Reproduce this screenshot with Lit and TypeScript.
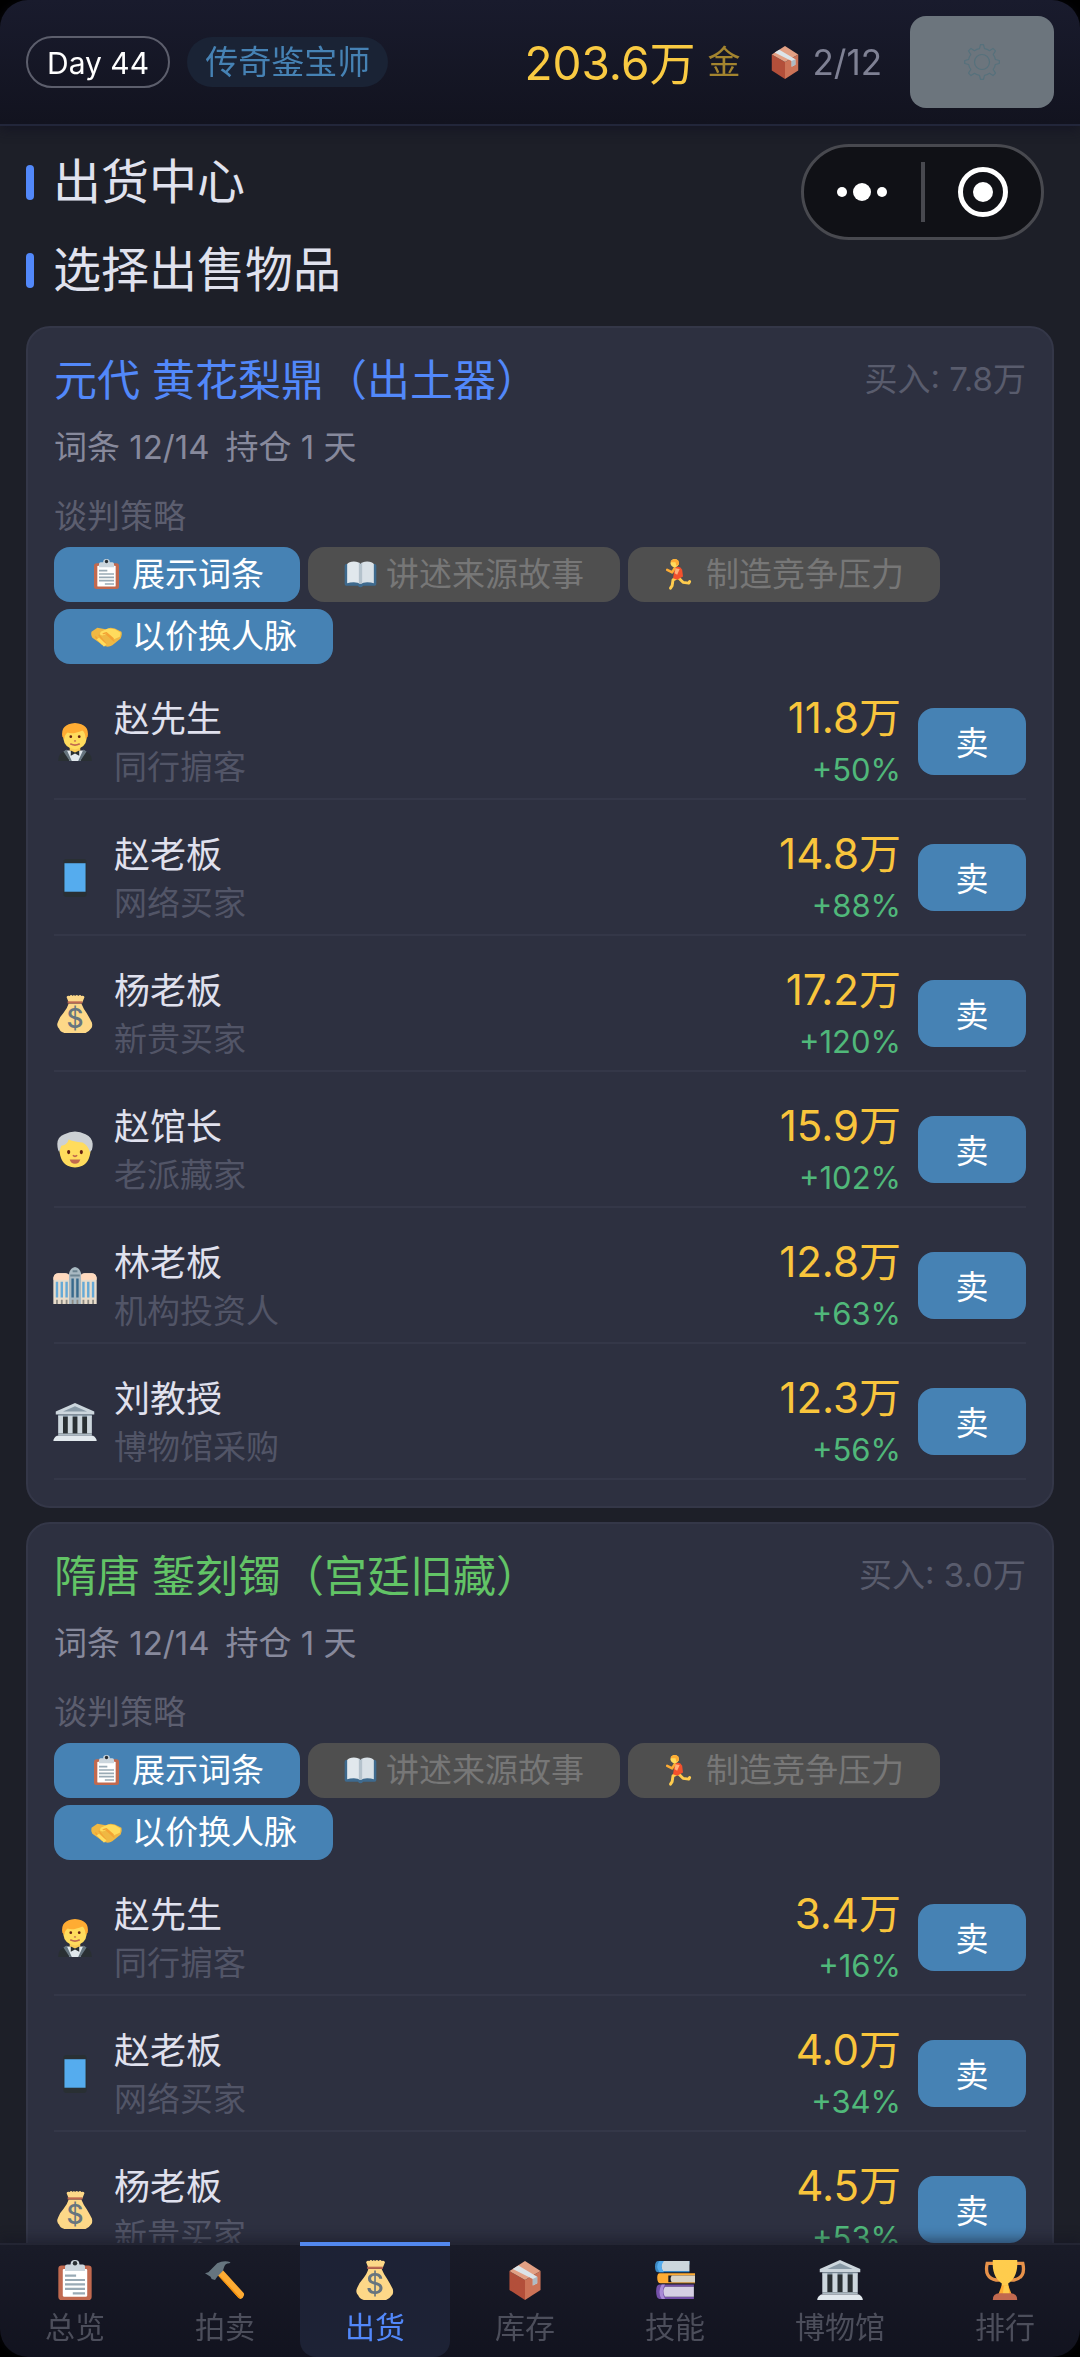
import { LitElement, html, css, svg, nothing } from 'lit'
import { customElement, property, state } from 'lit/decorators.js'
import { classMap } from 'lit/directives/class-map.js'

type Buyer = {
    icon: string
    name: string
    kind: string
    price: string
    gain: string
}

type Lot = {
    title: string
    tone: 'blue' | 'green'
    cost: string
    terms: string
    held: string
    buyers: Buyer[]
}

type Tactic = {
    icon: string
    label: string
    disabled?: boolean
}

const tactics: Tactic[] = [
    { icon: 'clipboard', label: '展示词条' },
    { icon: 'book', label: '讲述来源故事', disabled: true },
    { icon: 'runner', label: '制造竞争压力', disabled: true },
    { icon: 'handshake', label: '以价换人脉' },
]

const lots: Lot[] = [
    {
        title: '元代 黄花梨鼎（出土器）',
        tone: 'blue',
        cost: '7.8万',
        terms: '12/14',
        held: '1',
        buyers: [
            { icon: 'tuxedo', name: '赵先生', kind: '同行掮客', price: '11.8万', gain: '+50%' },
            { icon: 'phone', name: '赵老板', kind: '网络买家', price: '14.8万', gain: '+88%' },
            { icon: 'moneybag', name: '杨老板', kind: '新贵买家', price: '17.2万', gain: '+120%' },
            { icon: 'elder', name: '赵馆长', kind: '老派藏家', price: '15.9万', gain: '+102%' },
            { icon: 'tower', name: '林老板', kind: '机构投资人', price: '12.8万', gain: '+63%' },
            { icon: 'museum', name: '刘教授', kind: '博物馆采购', price: '12.3万', gain: '+56%' },
        ],
    },
    {
        title: '隋唐 錾刻镯（宫廷旧藏）',
        tone: 'green',
        cost: '3.0万',
        terms: '12/14',
        held: '1',
        buyers: [
            { icon: 'tuxedo', name: '赵先生', kind: '同行掮客', price: '3.4万', gain: '+16%' },
            { icon: 'phone', name: '赵老板', kind: '网络买家', price: '4.0万', gain: '+34%' },
            { icon: 'moneybag', name: '杨老板', kind: '新贵买家', price: '4.5万', gain: '+53%' },
        ],
    },
]

const tabs = [
    { id: 'overview', icon: 'clipboard', label: '总览' },
    { id: 'auction', icon: 'hammer', label: '拍卖' },
    { id: 'sell', icon: 'moneybag', label: '出货' },
    { id: 'stock', icon: 'box', label: '库存' },
    { id: 'skills', icon: 'books', label: '技能' },
    { id: 'museum', icon: 'museum', label: '博物馆' },
    { id: 'rank', icon: 'trophy', label: '排行' },
]

// every icon sits on a 36x36 grid, the two buildings run a little past its sides
const icons: Record<string, unknown> = {
    clipboard: svg`
        <rect x="3" y="5" width="30" height="31" rx="3" fill="#c1694f"/>
        <rect x="7" y="8" width="22" height="25" rx="1" fill="#fff"/>
        <path d="M9 10V6q0-2 2-2h3q0-4 4-4t4 4h3q2 0 2 2v4z" fill="#ccd6dd"/>
        <circle cx="18" cy="3" r="2" fill="#292f33"/>
        <path d="M9 14h10M9 18h18M9 22h18M9 26h18M16 30h11" stroke="#99aab5" stroke-width="2" fill="none"/>`,
    book: svg`
        <path d="M-1 8q0-2 2-2h34q2 0 2 2v22q0 2-2 2H21q-1 2-3 2t-3-2H1q-2 0-2-2z" fill="#3e6a8e"/>
        <path d="M2 6q2-3 8-3 6 0 8 3v24q-3-2-8-2-5 0-8 1z" fill="#e1e8ed"/>
        <path d="M34 6q-2-3-8-3-6 0-8 3v24q3-2 8-2 5 0 8 1z" fill="#d9e1e7"/>
        <path d="M16 4q2 1 2 4v22q-1-1-2-1zM20 4q-2 1-2 4v22q1-1 2-1z" fill="#b4c2cc"/>`,
    runner: svg`
        <path d="M15 22l-6 3-1 7-2 3" stroke="#ffcc4d" stroke-width="3.500" stroke-linecap="round" stroke-linejoin="round" fill="none"/>
        <path d="M15 22l6 6 7 1 1-2" stroke="#ffcc4d" stroke-width="3.500" stroke-linecap="round" stroke-linejoin="round" fill="none"/>
        <path d="M11 11q6-4 9 2l1 8-7 4-5-2z" fill="#f4512c"/>
        <path d="M11 11l-3 5-6-3" stroke="#ffac33" stroke-width="3" stroke-linecap="round" stroke-linejoin="round" fill="none"/>
        <path d="M12 11l-1 6 3 2 3-7z" fill="#ffb07a"/>
        <circle cx="11" cy="5" r="5" fill="#ffdc5d"/>
        <path d="M6 4q1-4 6-4 5 1 4 7l-3 1-1-4z" fill="#ffac33"/>`,
    handshake: svg`
        <path d="M0 13l7-5 10 2 6-2 5 1 8 4q1 4-1 8l-10 8q-6 4-13-1L1 20q-2-3-1-7z" fill="#efb843"/>
        <path d="M11 13l9-4 8 1 7 4-1 5-7 3-9-7q-5 4-8 1z" fill="#ffdc5d"/>
        <path d="M5 19l8 9M9 17l8 10M18 16l9 8M14 15q2 0 4-1l8 7" stroke="#f4a334" stroke-width="1.500" stroke-linecap="round" fill="none"/>
        <path d="M6 22l3-2 9 8-3 3z" fill="#ffdc5d"/>`,
    tuxedo: svg`
        <path d="M2 36q0-9 10-10h12q10 1 10 10z" fill="#292f33"/>
        <path d="M9 26h18l-4 10H13z" fill="#e1e8ed"/>
        <path d="M10 25l-3 2 6 9h2zM26 25l3 2-6 9h-2z" fill="#66757f"/>
        <path d="M13 21h10v5l-5 3-5-3z" fill="#f9ca55"/>
        <path d="M7 9q0-7 11-7t11 7v6q-1 9-11 10Q8 24 7 15z" fill="#ffdc5d"/>
        <path d="M6 13Q4 1 18 0q14 1 12 13l-2 2q0-6-3-8-9 4-14 2-3 2-3 6z" fill="#ffac33"/>
        <circle cx="14" cy="13" r="1.300" fill="#662113"/><circle cx="22" cy="13" r="1.300" fill="#662113"/>
        <path d="M14 20q4 2 8 0" stroke="#c1694f" stroke-width="1.600" stroke-linecap="round" fill="none"/>
        <path d="M17 17h2" stroke="#c1694f" stroke-width="1.200"/>
        <path d="M14 26l4 2 4-2v5l-4-2-4 2z" fill="#292f33"/>`,
    phone: svg`
        <rect x="7" y="0" width="22" height="36" rx="3" fill="#292f33"/>
        <rect x="8" y="4" width="20" height="27" fill="#55acee"/>`,
    moneybag: svg`
        <path d="M12 7L10 2q1-2 3-1 1-2 3 0 1-2 2 0 2-2 3 0 2-2 3 0 2-1 3 1l-2 5z" fill="#fdd888"/>
        <path d="M12 8h12q2 5 5 9 3 5 5 9 1 4-1 6-2 3-5 4H8q-4-1-5-4-3-3-1-7 2-5 5-8 4-5 5-9z" fill="#fdd888"/>
        <path d="M11 6h14v2H11z" fill="#bf6952"/>
        <text x="18" y="31" text-anchor="middle" font-family="Inter, sans-serif" font-size="25" font-weight="500" fill="#67757f">$</text>`,
    elder: svg`
        <path d="M3 14q0-11 15-11t15 11q0 15-8 19-7 3-14 0-8-4-8-19z" fill="#ffdc5d"/>
        <path d="M2 18Q-1 6 8 3q10-5 20 0 9 4 6 15l-2 2q-2-7-7-9-9-1-13-3-1 5-7 6l-2 6z" fill="#ccd0d4"/>
        <ellipse cx="12" cy="20" rx="1.500" ry="2" fill="#662113"/><ellipse cx="24" cy="20" rx="1.500" ry="2" fill="#662113"/>
        <path d="M16 23q2 2 4 0" stroke="#c1694f" stroke-width="1.500" fill="none"/>
        <path d="M13 27h10q-1 4-5 4t-5-4z" fill="#c1694f"/>`,
    tower: svg`
        <g transform="translate(-2.500) scale(1.140 1)">
            <path d="M0 35V10q1-4 4-4h6q3 0 4 4v25zM22 35V10q1-4 4-4h6q3 0 4 4v25z" fill="#e8dccb"/>
            <path d="M0 12q0-6 4-6h6q4 0 4 6zM22 12q0-6 4-6h6q4 0 4 6z" fill="#ffd9be"/>
            <path d="M13 35V6q1-5 5-6 4 1 5 6v29z" fill="#a9b9c2"/>
            <path d="M3 14v15M7 14v15M11 14v15M25 14v15M29 14v15M33 14v15" stroke="#65a9d6" stroke-width="2"/>
            <path d="M16 11v18M20 11v18" stroke="#37698c" stroke-width="2"/>
            <path d="M14 8h8M16 4h4" stroke="#6d8491" stroke-width="2"/>
            <path d="M3 31v4M7 31v4M11 31v4M16 31v4M20 31v4M25 31v4M29 31v4M33 31v4" stroke="#8d8a83" stroke-width="1.500"/>
        </g>`,
    museum: svg`
        <g transform="translate(-2.500) scale(1.140 1)">
            <path d="M5 11h26v19H5z" fill="#292f33"/>
            <path d="M2 8L18 0l16 8v3H2z" fill="#ccd6dd"/>
            <path d="M8 8l10-5 10 5z" fill="#8899a6"/>
            <path d="M4 11h28v2H4z" fill="#8899a6"/>
            <path d="M4 12h4v17H4zM12 12h4v17h-4zM20 12h4v17h-4zM28 12h4v17h-4z" fill="#ccd6dd"/>
            <path d="M4 29h28v2H4z" fill="#aebbc4"/>
            <path d="M0 36q0-3 3-5h30q3 2 3 5z" fill="#e1e8ed"/>
        </g>`,
    hammer: svg`
        <path d="M11 13l5-4 19 21q1 2-1 4-2 2-4 0z" fill="#ffac33"/>
        <path d="M14 15l18 19q-1 1-2 0L11 13z" fill="#f4900c"/>
        <path d="M0 12l3-1 8-8Q17 0 23 2l-1 1q-4 0-5 4l-1 3-5 5-2 3-3-1-1-2z" fill="#66757f"/>`,
    box: svg`
        <path d="M4 10l14 8v18L4 27z" fill="#b34f3a"/>
        <path d="M32 10l-14 8v18l14-9z" fill="#cc7357"/>
        <path d="M18 1l14 9-14 8-14-8z" fill="#e3a084"/>
        <path d="M7 8l5-3 17 10v6l-4 2v-6z" fill="#dce4e9"/>
        <path d="M25 17l4-2v6l-4 2z" fill="#aebbc4"/>`,
    books: svg`
        <path d="M3 1h28v3H5v6h26v1H3Q0 11 0 6t3-5z" fill="#3b88c3"/>
        <path d="M7 1h24v9H7Q4 6 7 1z" fill="#ccd6dd"/>
        <path d="M4 1h4q-4 5 0 10H4Q0 6 4 1z" fill="#55acee"/>
        <path d="M5 12h31v2H12v6h24v1H5q-3 0-3-5t3-4z" fill="#ffac33"/>
        <path d="M15 14h21v6H15q-2-3 0-6z" fill="#d8d3c7"/>
        <path d="M4 22h31v2H9v9h26v2H4q-3 0-3-7 0-6 3-6z" fill="#7450a8"/>
        <path d="M9 24h26v9H9q-3-5 0-9z" fill="#d5cfe3"/>
        <path d="M6 22h3q-4 6 0 13H6q-4-6 0-13z" fill="#a98bd6"/>`,
    trophy: svg`
        <path d="M9 3H2q-3 13 8 15h3M27 3h7q3 13-8 15h-3" stroke="#e8924a" stroke-width="3" fill="none"/>
        <path d="M7 0h22q1 15-8 21v9h-6v-9Q6 15 7 0z" fill="#ffcc4d"/>
        <path d="M15 23h6l3 8H12z" fill="#ffac33"/>
        <path d="M17 23h4l1 8h-6z" fill="#ffcc4d"/>
        <path d="M7 36q0-6 6-6h10q6 0 6 6z" fill="#c1694f"/>`,
    gear: svg`
        <g fill="none" stroke="#56717c" stroke-width="1.200" stroke-linejoin="round">
            <path d="M15.500 4.700L16.500 0.700h3L20.500 4.700Q23.500 5.200 25.500 6.700L29 4.400 31.500 6.900 29.200 10.500Q30.800 12.500 31.300 15.500L35.300 16.500v3L31.300 20.500Q30.800 23.500 29.200 25.500L31.500 29.100 29 31.600 25.500 29.300Q23.500 30.800 20.500 31.300L19.500 35.300h-3L15.500 31.300Q12.500 30.800 10.500 29.300L7 31.600 4.500 29.100 6.800 25.500Q5.200 23.500 4.700 20.500L0.700 19.500v-3L4.700 15.500Q5.200 12.500 6.800 10.500L4.500 6.900 7 4.400 10.500 6.700Q12.500 5.200 15.500 4.700z"/>
            <circle cx="18" cy="18" r="7.500"/>
        </g>`,
}

const icon = (name: string) => html`
    <svg class="icon" viewBox="0 0 36 36" overflow="visible" aria-hidden="true">${icons[name] ?? nothing}</svg>
`

@customElement('lot-card')
export class LotCard extends LitElement {
    @property({ attribute: false })
    lot!: Lot

    static styles = css`
        :host {
            display: block;
            background: #2d3040;
            border: 2px solid #343748;
            border-radius: 24px;
            padding: 22px 26px 26px;
        }
        .head {
            display: flex;
            align-items: center;
            justify-content: space-between;
        }
        h3 {
            margin: 0;
            font-size: 43px;
            font-weight: 400;
            line-height: 60px;
        }
        .blue {
            color: #5288fa;
        }
        .green {
            color: #62c466;
        }
        .cost {
            font-size: 33px;
            line-height: 46px;
            padding-bottom: 2px;
            color: #595c6d;
        }
        .meta {
            display: flex;
            gap: 16px;
            margin-top: 14px;
            font-size: 33px;
            line-height: 46px;
            color: #87899c;
        }
        .label {
            margin-top: 23px;
            font-size: 33px;
            line-height: 46px;
            color: #5c5e6f;
        }
        .tactics {
            display: flex;
            flex-wrap: wrap;
            gap: 7px 8px;
            margin-top: 8px;
        }
        button {
            border: 0;
            margin: 0;
            border-radius: 16px;
            font: inherit;
            font-size: 33px;
            color: #fff;
            background: #4682b4;
            cursor: pointer;
        }
        .tactic {
            display: flex;
            align-items: center;
            gap: 9px;
            height: 55px;
            padding: 0 36px 2px;
            line-height: 46px;
        }
        .tactic .icon {
            width: 33px;
            height: 30px;
        }
        .tactic:disabled {
            background: #4f4f4f;
            color: #777;
            cursor: default;
        }
        ul {
            list-style: none;
            margin: 0;
            padding: 0;
        }
        li {
            display: flex;
            align-items: center;
            box-sizing: border-box;
            height: 136px;
            padding: 24px 0 3px;
            border-bottom: 2px solid #343748;
        }
        li .icon {
            width: 42px;
            height: 38px;
            margin-right: 18px;
        }
        .who {
            flex: 1;
        }
        .name {
            font-size: 36px;
            line-height: 50px;
            color: #e0e1ee;
        }
        .kind {
            font-size: 33px;
            line-height: 46px;
            color: #525567;
        }
        .offer {
            text-align: right;
            margin-right: 17px;
        }
        .price {
            font-size: 42px;
            line-height: 56px;
            color: #f9c53c;
        }
        .gain {
            font-size: 31px;
            line-height: 48px;
            color: #50b87a;
        }
        .sell {
            width: 108px;
            height: 67px;
            padding: 0 0 2px;
        }
    `

    private _sell(buyer: Buyer) {
        this.dispatchEvent(new CustomEvent('sell', {
            detail: { lot: this.lot, buyer },
            bubbles: true,
            composed: true
        }))
    }

    protected override render() {
        const { title, tone, cost, terms, held, buyers } = this.lot
        return html`
            <div class="head">
                <h3 class="${tone}">${title}</h3>
                <span class="cost">买入: ${cost}</span>
            </div>
            <div class="meta"><span>词条 ${terms}</span><span>持仓 ${held} 天</span></div>
            <div class="label">谈判策略</div>
            <div class="tactics">
                ${tactics.map(t => html`
                    <button class="tactic" ?disabled="${t.disabled}">${icon(t.icon)}<span>${t.label}</span></button>
                `)}
            </div>
            <ul>
                ${buyers.map(b => html`
                    <li>
                        ${icon(b.icon)}
                        <div class="who">
                            <div class="name">${b.name}</div>
                            <div class="kind">${b.kind}</div>
                        </div>
                        <div class="offer">
                            <div class="price">${b.price}</div>
                            <div class="gain">${b.gain}</div>
                        </div>
                        <button class="sell" @click="${() => this._sell(b)}">卖</button>
                    </li>
                `)}
            </ul>
        `
    }
}

@customElement('app-root')
export class AppRoot extends LitElement {
    @state()
    private _tab = 'sell'

    static styles = css`
        :host {
            display: flex;
            flex-direction: column;
            position: relative;
            height: 100vh;
            overflow: hidden;
            background: #000;
            font-family: Inter, "Noto Sans CJK SC", sans-serif;
        }
        header {
            display: flex;
            align-items: center;
            box-sizing: border-box;
            height: 126px;
            padding: 0 26px;
            background: linear-gradient(#191b2d, #12131f);
            border-bottom: 2px solid #22263a;
            border-radius: 28px 28px 0 0;
            box-shadow: 0 4px 12px rgba(18, 19, 34, 0.7);
            z-index: 1;
        }
        .day {
            box-sizing: border-box;
            height: 52px;
            padding: 0 19px;
            border: 2px solid #5c5e6c;
            border-radius: 26px;
            font-size: 30px;
            line-height: 50px;
            color: #fff;
        }
        .rank {
            height: 50px;
            margin-left: 17px;
            padding: 0 18px;
            border-radius: 25px;
            background: #1a2335;
            font-size: 33px;
            line-height: 50px;
            color: #4682b4;
        }
        .money {
            display: flex;
            align-items: center;
            gap: 12px;
            margin-left: auto;
            padding-bottom: 4px;
            font-size: 46px;
            color: #f9ca42;
        }
        .unit {
            font-size: 33px;
            color: #a3842f;
        }
        .bag {
            display: flex;
            align-items: center;
            gap: 10px;
            margin-left: 28px;
            font-size: 35px;
            color: #7f8194;
        }
        .bag .icon {
            width: 34px;
            height: 34px;
        }
        .settings {
            display: flex;
            align-items: center;
            justify-content: center;
            width: 144px;
            height: 92px;
            margin-left: 28px;
            padding: 0;
            border: 0;
            border-radius: 16px;
            background: #6c757d;
        }
        .settings .icon {
            width: 36px;
            height: 36px;
        }
        .capsule {
            position: absolute;
            top: 144px;
            right: 36px;
            display: flex;
            align-items: center;
            box-sizing: border-box;
            width: 243px;
            height: 96px;
            border: 3px solid #48494f;
            border-radius: 48px;
            background: #101116;
            z-index: 2;
        }
        .capsule button {
            flex: 1;
            height: 100%;
            padding: 0;
            border: 0;
            background: none;
        }
        .capsule svg {
            display: block;
            width: 52px;
            height: 52px;
            margin: 0 auto;
        }
        .capsule i {
            width: 4px;
            height: 60px;
            background: #48494f;
        }
        main {
            flex: 1;
            min-height: 0;
            overflow: auto;
            scrollbar-width: none;
            padding: 12px 26px 0;
            background: #1d1f28;
        }
        h1, h2 {
            display: flex;
            align-items: center;
            gap: 19px;
            margin: 0;
            font-size: 48px;
            font-weight: 400;
            line-height: 88px;
            color: #e0e2ee;
        }
        h1::before, h2::before {
            content: "";
            width: 8px;
            height: 35px;
            border-radius: 4px;
            background: #5288fa;
        }
        .lots {
            display: flex;
            flex-direction: column;
            gap: 14px;
            padding-top: 12px;
        }
        nav {
            display: flex;
            box-sizing: border-box;
            height: 114px;
            border-top: 2px solid #232533;
            border-radius: 0 0 28px 28px;
            background: linear-gradient(#191b28, #12131f);
            box-shadow: 0 -4px 12px rgba(18, 19, 34, 0.5);
            z-index: 1;
        }
        .tab {
            flex: 1 1 auto;
            display: flex;
            flex-direction: column;
            align-items: center;
            margin: -3px 0 0;
            padding: 14px 0 0;
            border: 0;
            border-top: 4px solid transparent;
            background: none;
            font: inherit;
            font-size: 30px;
            line-height: 42px;
            color: #4c4e5b;
            cursor: pointer;
        }
        .tab .icon {
            width: 42px;
            height: 40px;
            margin-bottom: 6px;
        }
        .tab.active {
            border-top-color: #5288ee;
            border-radius: 0 0 16px 16px;
            background: #1d2235;
            color: #5288fa;
        }
    `

    protected override render() {
        return html`
            <header>
                <span class="day">Day 44</span>
                <span class="rank">传奇鉴宝师</span>
                <span class="money">203.6万<span class="unit">金</span></span>
                <span class="bag">${icon('box')}<span>2/12</span></span>
                <button class="settings" aria-label="设置">${icon('gear')}</button>
            </header>
            <div class="capsule">
                <button aria-label="更多">
                    <svg viewBox="0 0 52 52" fill="#fff">
                        <circle cx="6" cy="26" r="5"/><circle cx="26" cy="26" r="9"/><circle cx="46" cy="26" r="5"/>
                    </svg>
                </button>
                <i></i>
                <button aria-label="关闭">
                    <svg viewBox="0 0 52 52" fill="#fff">
                        <circle cx="26" cy="26" r="22.500" fill="none" stroke="#fff" stroke-width="5"/>
                        <circle cx="26" cy="26" r="10"/>
                    </svg>
                </button>
            </div>
            <main>
                <h1>出货中心</h1>
                <h2>选择出售物品</h2>
                <div class="lots">
                    ${lots.map(lot => html`<lot-card .lot="${lot}"></lot-card>`)}
                </div>
            </main>
            <nav>
                ${tabs.map(t => html`
                    <button
                        class="${classMap({ tab: true, active: t.id === this._tab })}"
                        @click="${() => { this._tab = t.id }}"
                    >${icon(t.icon)}<span>${t.label}</span></button>
                `)}
            </nav>
        `
    }
}

declare global {
    interface HTMLElementTagNameMap {
        'lot-card': LotCard
        'app-root': AppRoot
    }
}
